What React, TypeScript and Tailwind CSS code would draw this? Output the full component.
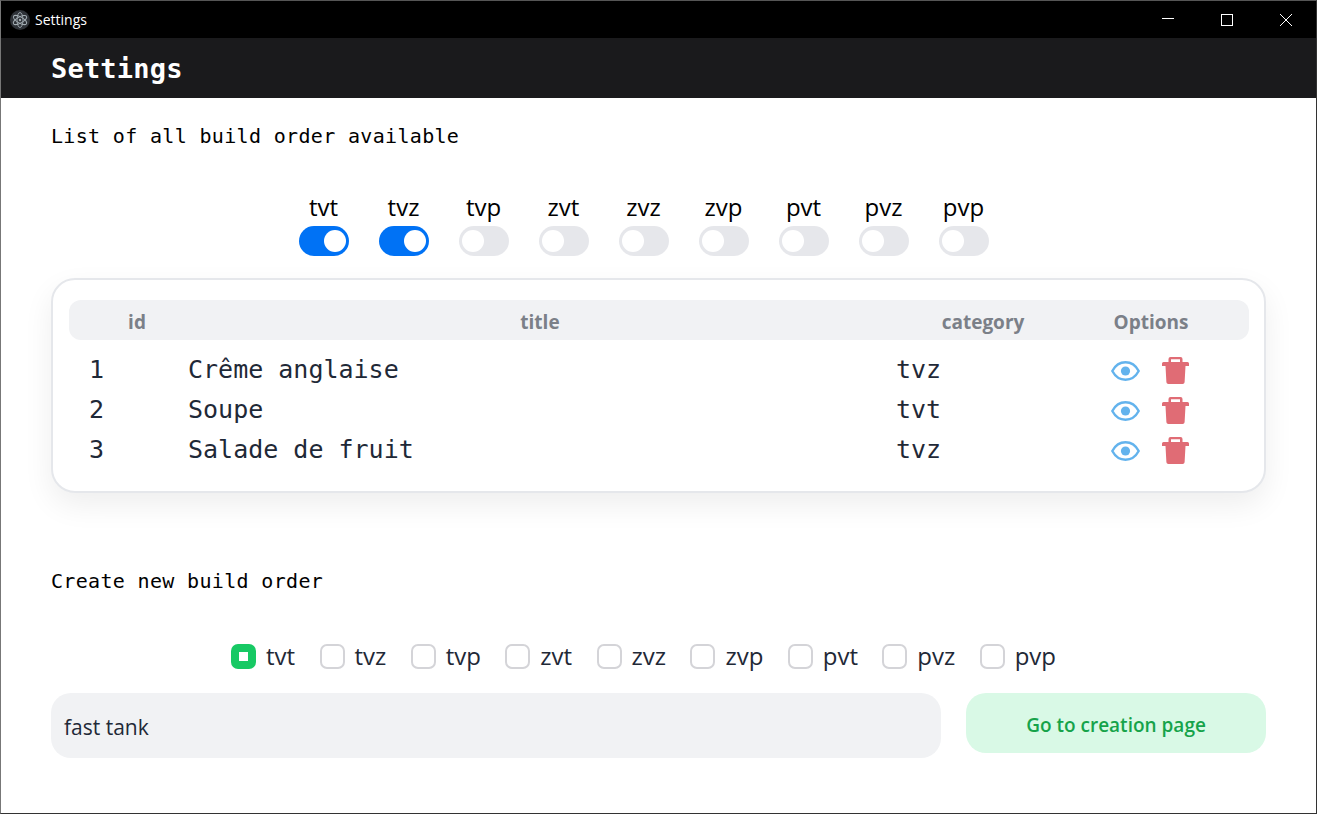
const cats = ["tvt", "tvz", "tvp", "zvt", "zvz", "zvp", "pvt", "pvz", "pvp"];
const rows = [
  ["1", "Crême anglaise", "tvz"],
  ["2", "Soupe", "tvt"],
  ["3", "Salade de fruit", "tvz"],
];
const sans = "font-['Open_Sans','Noto_Sans',sans-serif]";
const mono = "font-['DejaVu_Sans_Mono','Liberation_Mono',monospace]";

function ElectronLogo() {
  return (
    <svg viewBox="0 0 20 20" className="w-5 h-5">
      <circle cx="10" cy="10" r="10" fill="#2e3238" />
      <g fill="none" stroke="#a3adb3" strokeWidth="0.9">
        <ellipse cx="10" cy="10" rx="7.5" ry="3" transform="rotate(30 10 10)" />
        <ellipse cx="10" cy="10" rx="7.5" ry="3" transform="rotate(90 10 10)" />
        <ellipse cx="10" cy="10" rx="7.5" ry="3" transform="rotate(150 10 10)" />
      </g>
      <circle cx="10" cy="10" r="1.2" fill="#a3adb3" />
    </svg>
  );
}

function EyeIcon() {
  return (
    <svg viewBox="0 0 29 20" className="w-[29px] h-5 text-[#63b3ed]">
      <path
        d="M1.3 10C4.5 4 9.5 1.3 14.5 1.3C19.5 1.3 24.5 4 27.7 10C24.5 16 19.5 18.7 14.5 18.7C9.5 18.7 4.5 16 1.3 10Z"
        fill="none"
        stroke="currentColor"
        strokeWidth="2.4"
      />
      <circle cx="14.5" cy="10" r="4.6" fill="currentColor" />
    </svg>
  );
}

function TrashIcon() {
  return (
    <svg viewBox="0 0 27 27" className="w-[27px] h-[27px] text-[#e06c75]" fill="currentColor">
      <path
        fillRule="evenodd"
        d="M8.5 0H18.5A2 2 0 0 1 20.5 2V5H25.5A1.5 1.5 0 0 1 27 6.5V9H0V6.5A1.5 1.5 0 0 1 1.5 5H6.5V2A2 2 0 0 1 8.5 0ZM9 2.2V5H18V2.2Z"
      />
      <path d="M3.5 9H23.5L22.6 25.2A2 2 0 0 1 20.6 27H6.4A2 2 0 0 1 4.4 25.2Z" />
    </svg>
  );
}

function Toggle({ on }: { on: boolean }) {
  return (
    <div
      className={
        on
          ? "w-[50px] h-[30px] rounded-full bg-[#0072f5] flex items-center justify-end px-[3px]"
          : "w-[50px] h-[30px] rounded-full bg-[#e6e7eb] flex items-center justify-start px-[3px]"
      }
    >
      <div className="w-[22px] h-[22px] rounded-full bg-white" />
    </div>
  );
}

export default function App() {
  return (
    <div className={`w-[1317px] h-[814px] bg-white flex flex-col overflow-hidden border border-[#333] border-t-[#555] border-l-[#777] ${sans}`}>
      <div className="h-[37px] bg-black flex items-center text-white shrink-0">
        <div className="ml-[9px] flex items-center gap-[5px]">
          <ElectronLogo />
          <span className="text-[14px]">Settings</span>
        </div>
        <div className="ml-auto mr-px flex items-center gap-px">
          <div className="w-[58px] flex justify-center">
            <div className="w-3 h-px bg-white -translate-y-px" />
          </div>
          <div className="w-[58px] flex justify-center">
            <div className="w-3 h-3 border border-white" />
          </div>
          <div className="w-[58px] flex justify-center">
            <svg viewBox="0 0 12 12" className="w-3 h-3" stroke="white" strokeWidth="1">
              <path d="M0 0L12 12M12 0L0 12" />
            </svg>
          </div>
        </div>
      </div>
      <div className="h-[60px] bg-[#1a1a1c] flex items-center pl-[50px] pt-[2px] shrink-0">
        <h1 className={`text-white text-[27px] tracking-[0.2px] font-bold ${mono}`}>Settings</h1>
      </div>

      <div className="px-[50px] flex flex-col">
        <p className={`mt-[24px] text-[20px] leading-[28px] tracking-[0.33px] text-black ${mono}`}>List of all build order available</p>

        <div className="mt-[41px] flex justify-center gap-[30px] pr-[30px]">
          {cats.map((c, i) => (
            <div key={c} className="flex flex-col items-center">
              <span className="text-[24px] leading-[31px] mb-[4px] text-black">{c}</span>
              <Toggle on={i < 2} />
            </div>
          ))}
        </div>

        <div className="mt-[22px] w-[1215px] h-[215px] rounded-3xl border-2 border-[#e5e7eb] shadow-[0_12px_30px_rgba(0,0,0,0.07)] bg-white p-4 pr-[15px] pt-[20px]">
          <div className="h-10 rounded-xl bg-[#f1f2f4] grid grid-cols-[136px_670px_216px_120px] items-center text-center text-[19px] font-bold text-[#7b8088] pt-[4px]">
            <span>id</span>
            <span>title</span>
            <span>category</span>
            <span>Options</span>
          </div>
          <div className={`mt-[10px] ${mono}`}>
            {rows.map((r) => (
              <div key={r[0]} className="h-10 grid grid-cols-[99px_708px_215px_1fr] items-center pl-5 text-[25px] text-[#1f2937]">
                <span>{r[0]}</span>
                <span>{r[1]}</span>
                <span>{r[2]}</span>
                <span className="flex items-center gap-[22px] pt-[1px]">
                  <EyeIcon />
                  <TrashIcon />
                </span>
              </div>
            ))}
          </div>
        </div>

        <p className={`mt-[74px] text-[20px] leading-[28px] tracking-[0.33px] text-black ${mono}`}>Create new build order</p>

        <div className="mt-[45px] flex justify-center gap-[24.4px] pr-[30px]">
          {cats.map((c, i) => (
            <label key={c} className="flex items-center gap-[10px]">
              {i === 0 ? (
                <span className="w-[25px] h-[25px] rounded-[7px] bg-[#17c964] flex items-center justify-center">
                  <span className="w-[9px] h-[9px] bg-white" />
                </span>
              ) : (
                <span className="w-[25px] h-[25px] rounded-[7px] border-2 border-[#d4d4d8]" />
              )}
              <span className="text-[24px] leading-[32px] text-[#1f2937]">{c}</span>
            </label>
          ))}
        </div>

        <div className="mt-[21px] flex items-start gap-[25px]">
          <div className="w-[890px] h-[65px] rounded-[20px] bg-[#f1f2f4] flex items-center pl-[13px] pt-[4px] text-[21px] text-[#1f2937]">fast tank</div>
          <button className="w-[300px] h-[60px] rounded-[20px] bg-[#d9f9e6] text-[#16a34a] text-[19px] font-semibold pt-[4px]">Go to creation page</button>
        </div>
      </div>
    </div>
  );
}
